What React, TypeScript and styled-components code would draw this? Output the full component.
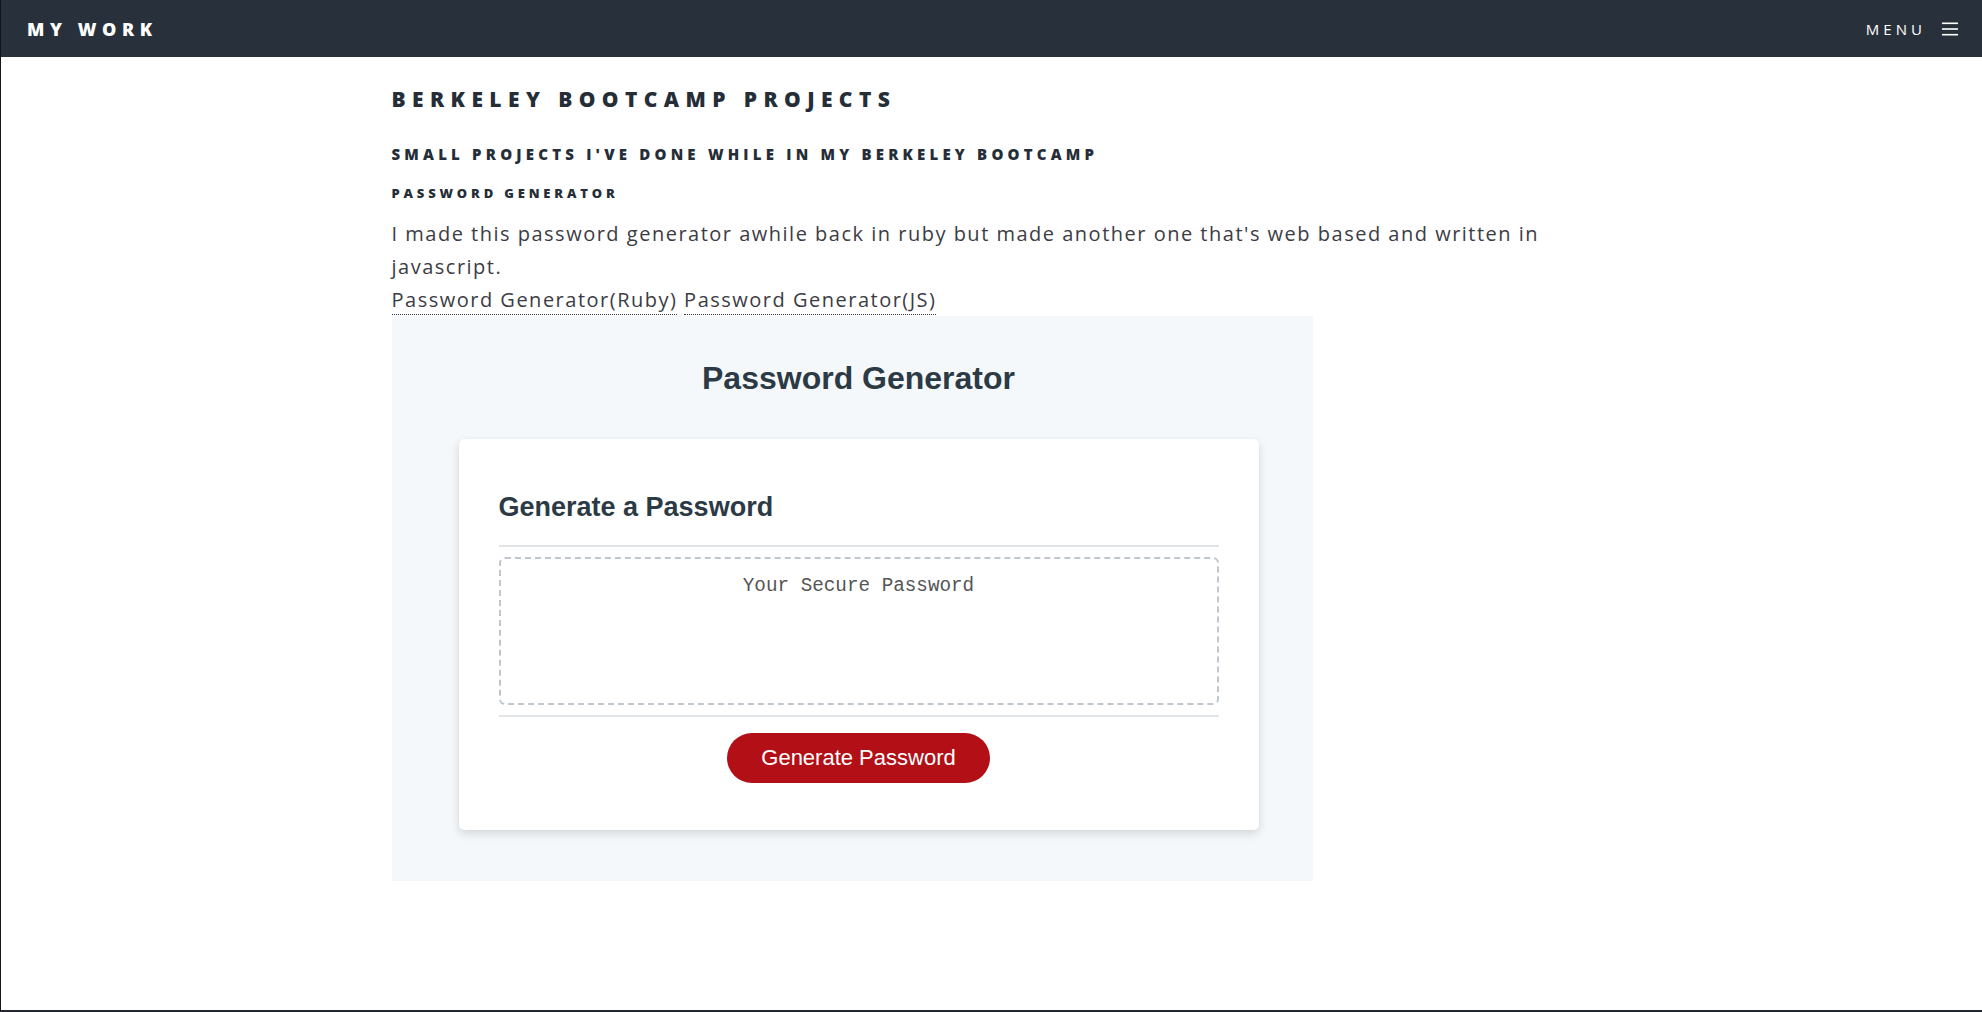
import React from "react";
import styled, { createGlobalStyle } from "styled-components";

const GlobalStyle = createGlobalStyle`
  html, body { margin: 0; padding: 0; background: #ffffff; }
  body { font-family: "Open Sans", "Liberation Sans", sans-serif; }
  *, *::before, *::after { box-sizing: border-box; }
`;

const Page = styled.div`
  min-height: 100vh;
  display: flex;
  flex-direction: column;
  border-left: 1px solid #111418;
  border-bottom: 2px solid #22282e;
  background: #ffffff;
`;

const TopBar = styled.header`
  height: 57px;
  flex: 0 0 57px;
  background: #28313b;
  display: flex;
  align-items: center;
  justify-content: space-between;
  padding: 0 24px 0 26px;
`;

const Brand = styled.div`
  font-family: "Open Sans", sans-serif;
  font-weight: 800;
  font-size: 18px;
  letter-spacing: 0.31em;
  color: #ffffff;
`;

const MenuButton = styled.div`
  display: flex;
  align-items: center;
  gap: 16px;
  color: #ffffff;
  font-family: "Open Sans", sans-serif;
  font-size: 15px;
  font-weight: 400;
  letter-spacing: 0.27em;
`;

const Main = styled.main`
  width: 100%;
  max-width: 1200px;
  margin: 0 auto;
  padding-top: 27px;
  padding-bottom: 40px;
`;

const Title = styled.h1`
  margin: 0;
  font-family: "Open Sans", sans-serif;
  font-weight: 800;
  font-size: 21px;
  line-height: 30px;
  letter-spacing: 0.305em;
  color: #252e37;
`;

const Subtitle = styled.h2`
  margin: 28px 0 0;
  font-family: "Open Sans", sans-serif;
  font-weight: 800;
  font-size: 15px;
  line-height: 24px;
  letter-spacing: 0.28em;
  color: #252e37;
`;

const ProjectTitle = styled.h3`
  margin: 17px 0 0;
  font-family: "Open Sans", sans-serif;
  font-weight: 800;
  font-size: 13px;
  line-height: 20px;
  letter-spacing: 0.295em;
  color: #252e37;
`;

const Description = styled.p`
  margin: 14px 0 0;
  font-family: "Open Sans", sans-serif;
  font-size: 20px;
  line-height: 33px;
  letter-spacing: 0.075em;
  color: #3c3c44;
`;

const ProjectLink = styled.a`
  color: #3c3c44;
  text-decoration: none;
  border-bottom: 1px dotted #3c3c44;
  padding-bottom: 1px;
`;

const Embed = styled.div`
  width: 921px;
  height: 565px;
  overflow: hidden;
  background: #f5f8fa;
`;

const EmbedDoc = styled.div`
  width: 934px;
  display: flex;
  flex-direction: column;
  align-items: center;
  padding-top: 44px;
  font-family: "Liberation Sans", Arial, sans-serif;
`;

const AppTitle = styled.h1`
  margin: 0;
  font-size: 32px;
  line-height: 37px;
  font-weight: 700;
  color: #2c3a45;
`;

const Card = styled.section`
  margin-top: 42px;
  width: 800px;
  background: #ffffff;
  border-radius: 5px;
  box-shadow: 0 4px 10px rgba(0, 0, 0, 0.13), 0 0 2px rgba(0, 0, 0, 0.06);
  padding: 53px 40px 47px;
  display: flex;
  flex-direction: column;
`;

const CardTitle = styled.h2`
  margin: 0;
  font-size: 27px;
  line-height: 31px;
  font-weight: 700;
  color: #2c3a45;
`;

const Divider = styled.hr<{ $gapTop: number }>`
  margin: ${(p) => p.$gapTop}px 0 0;
  border: 0;
  height: 2px;
  background: #e2e5e8;
`;

const Output = styled.textarea`
  margin-top: 10px;
  width: 100%;
  height: 148px;
  resize: none;
  border: 2px dashed #bfc6cd;
  border-radius: 6px;
  padding: 16px 10px 10px;
  font-family: "Liberation Mono", "Courier New", monospace;
  font-size: 19.3px;
  line-height: 22px;
  text-align: center;
  color: #333;
  background: #ffffff;
  outline: none;
  &::placeholder {
    color: #555555;
  }
`;

const Actions = styled.div`
  display: flex;
  justify-content: center;
  padding-top: 16px;
`;

const GenerateButton = styled.button`
  height: 50px;
  padding: 0 34px;
  border: 0;
  border-radius: 25px;
  background: #b30f16;
  color: #ffffff;
  font-family: "Liberation Sans", Arial, sans-serif;
  font-size: 22px;
  cursor: pointer;
`;

const HamburgerIcon = () => (
  <svg width="16" height="14" viewBox="0 0 16 14" fill="none">
    <rect x="0" y="0.5" width="16" height="1.6" fill="#ffffff" />
    <rect x="0" y="6.2" width="16" height="1.6" fill="#ffffff" />
    <rect x="0" y="11.9" width="16" height="1.6" fill="#ffffff" />
  </svg>
);

export default function App() {
  return (
    <>
      <GlobalStyle />
      <Page>
        <TopBar>
          <Brand>MY WORK</Brand>
          <MenuButton>
            <span>MENU</span>
            <HamburgerIcon />
          </MenuButton>
        </TopBar>
        <Main>
          <Title>BERKELEY BOOTCAMP PROJECTS</Title>
          <Subtitle>SMALL PROJECTS I'VE DONE WHILE IN MY BERKELEY BOOTCAMP</Subtitle>
          <ProjectTitle>PASSWORD GENERATOR</ProjectTitle>
          <Description>
            I made this password generator awhile back in ruby but made another one that's web based and written in
            javascript.
            <br />
            <ProjectLink href="#">Password Generator(Ruby)</ProjectLink>{" "}
            <ProjectLink href="#">Password Generator(JS)</ProjectLink>
          </Description>
          <Embed>
            <EmbedDoc>
              <AppTitle>Password Generator</AppTitle>
              <Card>
                <CardTitle>Generate a Password</CardTitle>
                <Divider $gapTop={22} />
                <Output readOnly placeholder="Your Secure Password" />
                <Divider $gapTop={10} />
                <Actions>
                  <GenerateButton type="button">Generate Password</GenerateButton>
                </Actions>
              </Card>
            </EmbedDoc>
          </Embed>
        </Main>
      </Page>
    </>
  );
}
